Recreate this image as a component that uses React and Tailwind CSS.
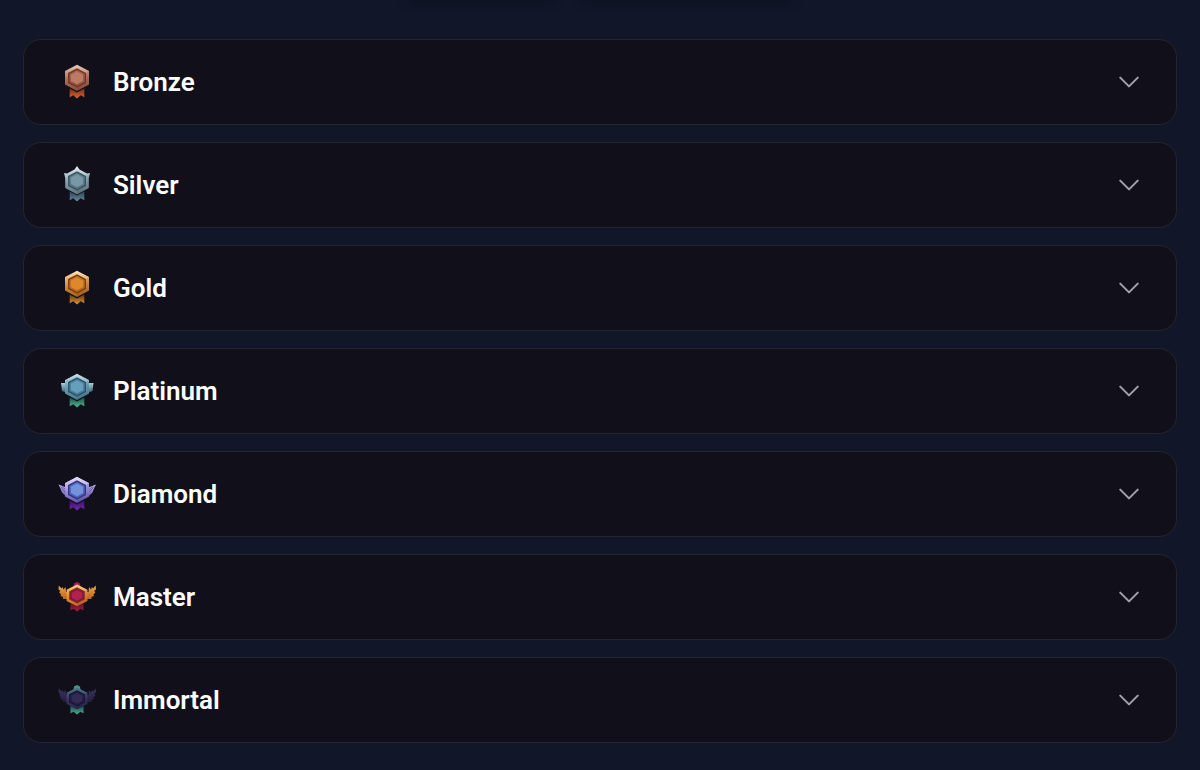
import { useState } from 'react';

const RING = 'M20 2.700 32 9V22.500L20 29 8 22.500V9Z';
const BEVEL = 'M20 6.200 29 11V20.900L20 25.700 11 20.900V11Z';
const GEM = 'M20 7.900 27.600 11.900V20L20 24 12.400 20V11.900Z';
const FACET = 'M20 9.600 26 12.800V19L20 22.200 14 19V12.800Z';
const RIBBON = 'M12.700 26.500V35.200L16.300 33.300 20 36.500 23.700 33.300 27.300 35.200V26.500L20 30.500Z';

const tiers = [
  {
    name: 'Bronze',
    rim: ['#f0cbb9', '#b07562', '#8a4b3c'],
    inner: '#6f362a',
    gem: ['#a86350', '#94513f'],
    facet: '#bd7a65',
    ribbon: ['#7a2c17', '#e0672c'],
  },
  {
    name: 'Silver',
    rim: ['#e6f2f4', '#91abb4', '#5a7380'],
    inner: '#3b5461',
    gem: ['#668592', '#54717f'],
    facet: '#7898a5',
    ribbon: ['#2f4352', '#668b9f'],
    spikes: true,
  },
  {
    name: 'Gold',
    rim: ['#ffe9bd', '#d9974a', '#a4601f'],
    inner: '#7d3f10',
    gem: ['#c9741f', '#b9671b'],
    facet: '#dd882b',
    ribbon: ['#6b370e', '#dc9439'],
  },
  {
    name: 'Platinum',
    rim: ['#c9e4ea', '#6e9fb4', '#4a7a90'],
    inner: '#2d5468',
    gem: ['#4f88a4', '#477c9a'],
    facet: '#669fbb',
    ribbon: ['#1c5349', '#4cbd94'],
    wings: 'plate',
    wing: ['#a8cfd7', '#345b6d'],
  },
  {
    name: 'Diamond',
    rim: ['#ebe4ff', '#a195dc', '#6654b0'],
    inner: '#373581',
    gem: ['#5470c6', '#4b63b8'],
    facet: '#7592dc',
    ribbon: ['#351062', '#7728b5'],
    wings: 'blade',
    wing: ['#cbbdf3', '#6a4bab'],
  },
  {
    name: 'Master',
    rim: ['#ffd184', '#e5913c', '#c56a24'],
    inner: '#8a2a1f',
    gem: ['#8c1640', '#7b133b'],
    facet: '#b02250',
    ribbon: ['#541022', '#a71f43'],
    wings: 'feather',
    wing: ['#f0a84a', '#b8641f'],
    crown: '#a51d55',
    small: true,
  },
  {
    name: 'Immortal',
    rim: ['#4b7f86', '#3b3766', '#2b2649'],
    inner: '#181430',
    gem: ['#29224a', '#241e40'],
    facet: '#332a55',
    ribbon: ['#1d4a4c', '#48b093'],
    wings: 'feather',
    wing: ['#37345f', '#231f40'],
    crown: '#43948b',
    small: true,
  },
];

const wingShapes = {
  plate: 'M10 12 4 12 5 20 10 22Z',
  blade: 'M12 13 8 13 1.500 10.500 3.500 14.500 5 18.500 8 21.500 12 23Z',
  feather:
    'M12 15 9 15 8.500 10 6.500 12.500 5.500 10 4.500 11.500 1.800 8.500 1.500 12.500 3.500 14 2 15 4 17.500 3.500 19 6 20 6 22 12 22Z',
};

function Gradient({ id, colors }) {
  return (
    <linearGradient id={id} x1="0" y1="0" x2="0" y2="1">
      {colors.map((color, i) => (
        <stop key={color} offset={i / (colors.length - 1)} stopColor={color} />
      ))}
    </linearGradient>
  );
}

function Medal({ tier }) {
  const id = tier.name.toLowerCase();

  return (
    <svg viewBox="0 0 40 40" className="size-10 shrink-0" aria-hidden="true">
      <defs>
        <Gradient id={`${id}-rim`} colors={tier.rim} />
        <Gradient id={`${id}-gem`} colors={tier.gem} />
        <Gradient id={`${id}-ribbon`} colors={tier.ribbon} />
        {tier.wing && <Gradient id={`${id}-wing`} colors={tier.wing} />}
      </defs>

      {tier.wings && (
        <g fill={`url(#${id}-wing)`}>
          <path d={wingShapes[tier.wings]} />
          <path d={wingShapes[tier.wings]} transform="matrix(-1 0 0 1 40.500 0)" />
        </g>
      )}
      {tier.wings === 'blade' && (
        <path
          d="M3.500 12.500 8 18M5 12.500 10 17M37 12.500 32.500 18M35.500 12.500 30.500 17"
          stroke={tier.inner}
          strokeWidth="0.6"
        />
      )}

      <path
        d={RIBBON}
        fill={`url(#${id}-ribbon)`}
        transform={tier.small ? 'translate(2 3) scale(0.9 0.86)' : undefined}
      />

      {tier.spikes && (
        <path
          d="M20 1 22.500 4.500 30 8.500 33 8 31.800 13V23L20 29.500 8.200 23V13L7 8 10 8.500 17.500 4.500Z"
          fill={`url(#${id}-rim)`}
        />
      )}

      {tier.crown && <path d="M16.500 10 17 6.500 20 5 23 6.500 23.500 10Z" fill={tier.crown} />}

      {/* Hexagonal frame and stone */}
      <g transform={tier.small ? 'translate(2.6 5.2) scale(0.87 0.83)' : undefined}>
        {!tier.spikes && <path d={RING} fill={`url(#${id}-rim)`} />}
        <path d="M32 9V22.500L20 29V25.700L29 20.900V11Z" fill={tier.inner} opacity="0.2" />
        <path d={BEVEL} fill={tier.inner} />
        <path d={GEM} fill={`url(#${id}-gem)`} />
        <path d={FACET} fill={tier.facet} />
      </g>
    </svg>
  );
}

function TierRow({ tier }) {
  const [open, setOpen] = useState(false);

  return (
    <li className="rounded-[18px] border border-[#25252f] bg-[#11101a]">
      <button
        type="button"
        aria-expanded={open}
        onClick={() => setOpen(!open)}
        className="flex w-full cursor-pointer items-center gap-4 px-[33px] py-[22px] text-left"
      >
        <Medal tier={tier} />
        <span className="flex-1 text-[26px] leading-8 font-semibold text-white">{tier.name}</span>
        <svg
          viewBox="0 0 24 24"
          fill="none"
          stroke="currentColor"
          strokeWidth="1.800"
          strokeLinecap="round"
          strokeLinejoin="round"
          className={open ? 'size-7 rotate-180 text-[#a0a1ab]' : 'size-7 text-[#a0a1ab]'}
          aria-hidden="true"
        >
          <path d="m19.500 8.250-7.500 7.500-7.500-7.500" />
        </svg>
      </button>
    </li>
  );
}

export default function App() {
  return (
    <main className="min-h-screen overflow-hidden bg-[#111729] px-[23px] pb-7 font-[Roboto,sans-serif]">
      {/* Lower shadow of the controls above the list */}
      <div className="flex h-[39px] items-start justify-center gap-7" aria-hidden="true">
        <div className="-mt-2 h-2 w-36 shadow-[0_0_12px_#090f18]" />
        <div className="-mt-2 h-2 w-52 shadow-[0_0_12px_#090f18]" />
      </div>
      <ul className="flex flex-col gap-[17px]">
        {tiers.map((tier) => (
          <TierRow key={tier.name} tier={tier} />
        ))}
      </ul>
    </main>
  );
}
